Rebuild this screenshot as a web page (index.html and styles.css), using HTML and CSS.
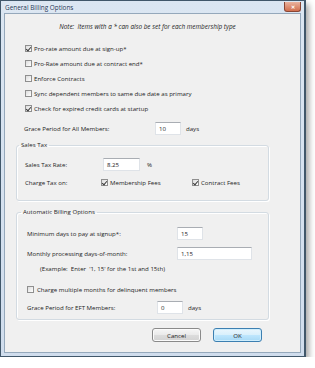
FILE: index.html
```html
<!DOCTYPE html>
<html lang="en">

<head>
   <meta charset="UTF-8">
   <meta name="viewport" content="width=device-width, initial-scale=1.0">
   <title>General Billing Options</title>
   <link rel="stylesheet" href="styles.css">
</head>

<body>
   <div class="window">
      <div class="titlebar">
         <span class="title">General Billing Options</span>
         <span class="close">&#x2715;</span>
      </div>

      <div class="client">
         <p class="note">Note:&nbsp; Items with a * can also be set for each membership type</p>

         <div class="checks">
            <div class="check"><span class="box on"></span>Pro-rate amount due at sign-up*</div>
            <div class="check"><span class="box"></span>Pro-Rate amount due at contract end*</div>
            <div class="check"><span class="box"></span>Enforce Contracts</div>
            <div class="check"><span class="box"></span>Sync dependent members to same due date as primary</div>
            <div class="check"><span class="box on"></span>Check for expired credit cards at startup</div>
         </div>

         <div class="row grace">
            <span class="lbl">Grace Period for All Members:</span>
            <span class="field w-small">10</span>
            <span class="unit">days</span>
         </div>

         <fieldset class="group tax">
            <legend>Sales Tax</legend>
            <div class="row first">
               <span class="lbl">Sales Tax Rate:</span>
               <span class="field w-rate">8.25</span>
               <span class="unit">%</span>
            </div>
            <div class="row">
               <span class="lbl">Charge Tax on:</span>
               <span class="check inline fees"><span class="box on"></span>Membership Fees</span>
               <span class="check inline"><span class="box on"></span>Contract Fees</span>
            </div>
         </fieldset>

         <fieldset class="group auto">
            <legend>Automatic Billing Options</legend>
            <div class="row first">
               <span class="lbl">Minimum days to pay at signup*:</span>
               <span class="field w-small">15</span>
            </div>
            <div class="row">
               <span class="lbl">Monthly processing days-of-month:</span>
               <span class="field w-wide">1,15</span>
            </div>
            <p class="example">(Example:&nbsp; Enter&nbsp; '1, 15' for the 1st and 15th)</p>
            <div class="check multi"><span class="box"></span>Charge multiple months for delinquent members</div>
            <div class="row eft">
               <span class="lbl">Grace Period for EFT Members:</span>
               <span class="field w-small">0</span>
               <span class="unit">days</span>
            </div>
         </fieldset>

         <div class="buttons">
            <button class="btn">Cancel</button>
            <button class="btn default">OK</button>
         </div>
      </div>
   </div>
</body>

</html>
```

FILE: styles.css
```css
* {
   margin: 0;
   padding: 0;
   box-sizing: border-box;
}

body {
   background: #ffffff;
   font-family: "Open Sans", "Liberation Sans", sans-serif;
   font-size: 6.1px;
   color: #1c1c1c;
}

/* window frame */
.window {
   width: 306px;
   height: 357px;
   border: 1px solid #41576a;
   border-right-width: 2px;
   background: linear-gradient(#dbe6f2, #d0dded);
   box-shadow: 3px 4px 6px rgba(0, 0, 0, 0.35);
   display: flex;
   flex-direction: column;
   padding: 0 3px 3px 3px;
}

.titlebar {
   height: 12px;
   display: flex;
   align-items: center;
   justify-content: space-between;
}

.title {
   padding-left: 1px;
   font-size: 6.4px;
   color: #1e3856;
   text-shadow: 0 0 3px #ffffff;
}

.close {
   width: 17px;
   height: 10px;
   align-self: flex-start;
   margin-top: 1px;
   border: 1px solid #8a4634;
   border-top: none;
   border-radius: 0 0 3px 3px;
   background: linear-gradient(#eab29e, #d26f4e);
   color: #ffffff;
   font-size: 5px;
   font-weight: bold;
   display: flex;
   align-items: center;
   justify-content: center;
}

.client {
   flex: 1;
   background: #f0f0f0;
   border: 1px solid #95a8bb;
   display: flex;
   flex-direction: column;
}

.note {
   margin-top: 8px;
   line-height: 10px;
   text-align: center;
   font-style: italic;
   font-size: 6.4px;
   padding-right: 10px;
}

/* checkboxes */
.checks {
   margin-top: 9px;
   padding-left: 20px;
}

.check {
   height: 15px;
   display: flex;
   align-items: center;
}

.check.inline {
   height: 13px;
}

.box {
   width: 7px;
   height: 7px;
   border: 1px solid #8f8f8f;
   background: linear-gradient(135deg, #dcdcdc, #ffffff);
   margin-right: 2px;
   display: flex;
   align-items: center;
   justify-content: center;
}

.box.on::after {
   content: "";
   width: 2px;
   height: 4px;
   margin-top: -1px;
   border: solid #3a3a3a;
   border-width: 0 1px 1px 0;
   transform: rotate(40deg);
}

/* label + field rows */
.row {
   height: 13px;
   display: flex;
   align-items: center;
}

.lbl {
   flex-shrink: 0;
}

.field {
   height: 13px;
   background: #ffffff;
   border: 1px solid #dfe3e8;
   border-top-color: #a9adb3;
   padding-left: 3px;
   display: flex;
   align-items: center;
}

.unit {
   margin-left: 5px;
}

.grace {
   margin-top: 6px;
   padding-left: 19px;
}

.grace .lbl {
   width: 131px;
}

.w-small {
   width: 26px;
}

.w-rate {
   width: 37px;
}

.w-wide {
   width: 75px;
}

/* group boxes */
.group {
   margin: 6px 31px 0 11px;
   border: 1px solid #d3dbe2;
   border-radius: 3px;
   box-shadow: inset 1px 1px 0 #ffffff, 1px 1px 0 #ffffff;
   padding: 0 0 11px 8px;
}

.group legend {
   margin-left: -6px;
   padding: 0 2px;
   line-height: 8px;
}

.tax .row.first {
   margin-top: 9px;
}

.tax .row + .row {
   margin-top: 5px;
}

.tax .lbl {
   width: 78px;
}

.tax .unit {
   margin-left: 7px;
}

.tax .fees {
   width: 91px;
   margin-left: -2px;
}

.auto {
   margin-top: 7px;
   padding: 0 0 5px 10px;
}

.auto .row.first {
   margin-top: 11px;
}

.auto .row + .row {
   margin-top: 7px;
}

.auto .lbl {
   width: 150px;
}

.example {
   margin-top: 4px;
   padding-left: 13px;
   line-height: 9px;
}

.multi {
   height: 11px;
   margin-top: 11px;
}

.multi .box {
   margin-right: 3px;
}

.auto .eft {
   margin-top: 6px;
}

.eft .lbl {
   width: 130px;
}

/* dialog buttons */
.buttons {
   margin-top: 8px;
   padding-right: 38px;
   display: flex;
   justify-content: flex-end;
   gap: 12px;
}

.btn {
   width: 49px;
   height: 14px;
   font-family: inherit;
   font-size: 6.1px;
   color: #1c1c1c;
   border: 1px solid #8a8a8a;
   border-radius: 3px;
   background: linear-gradient(#f6f6f6 0%, #eaeaea 48%, #dcdcdc 52%, #d2d2d2 100%);
   box-shadow: inset 0 0 0 1px #fbfbfb;
}

.btn.default {
   border-color: #3c7fb1;
   background: linear-gradient(#eaf6fd 0%, #d9f0fc 48%, #bee6fd 52%, #a7d9f5 100%);
   box-shadow: inset 0 0 0 1px #cfeefd;
}
```
